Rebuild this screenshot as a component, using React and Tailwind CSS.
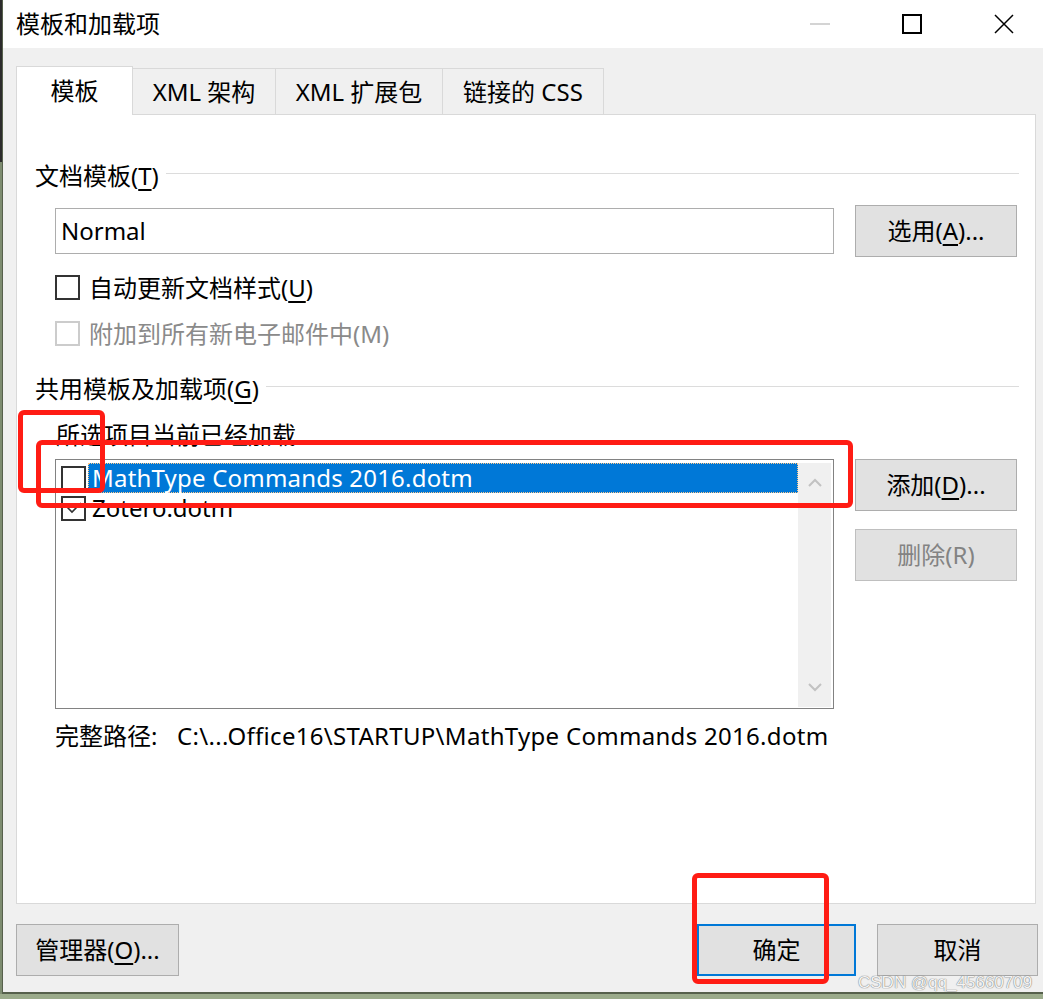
import React from 'react';

const FONT = { fontFamily: '"Noto Sans", "Noto Sans CJK SC", sans-serif' };

function Btn({ children, w, disabled, primary }) {
  return (
    <div
      className={`h-[52px] flex items-center justify-center bg-[#e1e1e1] text-[24px] ${
        primary ? 'border-2 border-[#0078d7]' : disabled ? 'border border-[#bfbfbf] text-[#838383]' : 'border border-[#adadad] text-black'
      }`}
      style={{ width: w }}
    >
      {children}
    </div>
  );
}

function Check({ checked, disabled }) {
  return (
    <div
      className={`w-[25px] h-[25px] shrink-0 border-2 bg-white flex items-center justify-center ${
        disabled ? 'border-[#cccccc]' : 'border-[#333333]'
      }`}
    >
      {checked && (
        <svg width="18" height="14" viewBox="0 0 18 14">
          <path d="M2 6 L7 11 L16 2" fill="none" stroke="#333" strokeWidth="1.6" />
        </svg>
      )}
    </div>
  );
}

function GroupHeader({ children }) {
  return (
    <div className="h-[30px] flex items-center text-[24px] text-black">
      <span className="whitespace-nowrap">{children}</span>
      <div className="flex-1 h-px bg-[#dcdcdc] ml-[7px] -translate-y-[3px]" />
    </div>
  );
}

function Chevron({ up }) {
  return (
    <svg width="14" height="9" viewBox="0 0 14 9">
      <path d={up ? 'M1 8 L7 2 L13 8' : 'M1 1 L7 7 L13 1'} fill="none" stroke="#c2c2c2" strokeWidth="2" />
    </svg>
  );
}

export default function App() {
  return (
    <div className="relative w-[1043px] h-[999px] flex flex-col bg-[#9bab8b] overflow-hidden" style={FONT}>
      <div className="flex h-[994px]">
        {/* background strip at the left */}
        <div className="w-[2px] flex flex-col">
          <div className="h-[162px] bg-[#2c2c2c]" />
          <div className="flex-1 bg-[#7d8c70]" />
        </div>

        {/* dialog window */}
        <div className="w-[1041px] flex flex-col border-l border-b-2 border-[#56604c] bg-[#f0f0f0]">
          {/* title bar */}
          <div className="h-[48px] bg-white flex items-center pl-[13px] shrink-0">
            <span className="text-[24px] text-black">模板和加载项</span>
            <div className="ml-auto flex items-center gap-[72px] pr-[29px]">
              <svg width="20" height="20" viewBox="0 0 20 20">
                <path d="M0 10 H20" stroke="#c6c6c6" strokeWidth="1.5" />
              </svg>
              <svg width="20" height="20" viewBox="0 0 20 20">
                <rect x="1" y="1" width="18" height="18" fill="none" stroke="#000" strokeWidth="2" />
              </svg>
              <svg width="20" height="20" viewBox="0 0 20 20">
                <path d="M1 1 L19 19 M19 1 L1 19" stroke="#000" strokeWidth="1.5" />
              </svg>
            </div>
          </div>

          {/* tabs */}
          <div className="pt-[17px] pl-[13px] flex items-end h-[66px] shrink-0">
            <div className="w-[117px] h-[49px] bg-white border border-b-0 border-[#d9d9d9] flex items-center justify-center text-[24px] relative z-10 -mb-px">
              模板
            </div>
            <div className="w-[143px] h-[46px] border-t border-r border-[#d9d9d9] flex items-center justify-center text-[24px]">
              XML 架构
            </div>
            <div className="w-[167px] h-[46px] border-t border-r border-[#d9d9d9] flex items-center justify-center text-[24px]">
              XML 扩展包
            </div>
            <div className="w-[161px] h-[46px] border-t border-r border-[#d9d9d9] flex items-center justify-center text-[24px]">
              链接的 CSS
            </div>
          </div>

          {/* tab panel */}
          <div className="ml-[13px] w-[1020px] h-[790px] bg-white border border-[#d9d9d9] shrink-0 flex flex-col pl-[18px] pr-[16px] pt-[46px] text-black">
            <GroupHeader>
              文档模板(<u className="underline-offset-4">T</u>)
            </GroupHeader>

            <div className="mt-[14px] h-[52px] pl-[20px] flex items-center gap-[21px]">
              <div className="w-[779px] h-[46px] border border-[#adadad] flex items-center pl-[5px] text-[24px]">
                Normal
              </div>
              <Btn w={162}>
                选用(<u className="underline-offset-4">A</u>)...
              </Btn>
            </div>

            <div className="mt-[18px] h-[25px] pl-[20px] flex items-center gap-[9px] text-[24px]">
              <Check />
              <span>
                自动更新文档样式(<u className="underline-offset-4">U</u>)
              </span>
            </div>

            <div className="mt-[21px] h-[25px] pl-[20px] flex items-center gap-[9px] text-[24px] text-[#8a8a8a]">
              <Check disabled />
              <span>附加到所有新电子邮件中(M)</span>
            </div>

            <div className="mt-[28px]">
              <GroupHeader>
                共用模板及加载项(<u className="underline-offset-4">G</u>)
              </GroupHeader>
            </div>

            <div className="mt-[16px] h-[30px] pl-[21px] flex items-center text-[24px]">所选项目当前已经加载</div>

            <div className="mt-[9px] pl-[20px] flex gap-[21px]">
              {/* list */}
              <div className="w-[779px] h-[250px] border border-[#828282] flex pt-[3px] pb-[1px] pl-[3px] pr-[2px]">
                <div className="flex-1 flex flex-col">
                  <div className="h-[30px] flex items-center">
                    <div className="ml-[2px] mr-[2px]">
                      <Check />
                    </div>
                    <div className="flex-1 h-[30px] bg-[#0078d7] border border-dotted border-[#ffc98a] text-white text-[24px] tracking-[0.2px] flex items-center pl-[3px]">
                      MathType Commands 2016.dotm
                    </div>
                  </div>
                  <div className="h-[30px] flex items-center">
                    <div className="ml-[2px] mr-[6px]">
                      <Check checked />
                    </div>
                    <span className="text-[24px]">Zotero.dotm</span>
                  </div>
                </div>
                <div className="w-[33px] h-full bg-[#f0f0f0] flex flex-col items-center justify-between py-[15px]">
                  <Chevron up />
                  <Chevron />
                </div>
              </div>

              {/* side buttons */}
              <div className="flex flex-col gap-[18px]">
                <Btn w={162}>
                  添加(<u className="underline-offset-4">D</u>)...
                </Btn>
                <Btn w={162} disabled>
                  删除(R)
                </Btn>
              </div>
            </div>

            <div className="mt-[12px] h-[30px] pl-[20px] flex items-center text-[24px]">
              <span className="w-[122px]">完整路径:</span>
              <span className="tracking-[0.3px]">C:\...Office16\STARTUP\MathType Commands 2016.dotm</span>
            </div>
          </div>

          {/* bottom buttons */}
          <div className="mt-[20px] pl-[13px] pr-[5px] flex items-center">
            <Btn w={163}>
              管理器(<u className="underline-offset-4">O</u>)...
            </Btn>
            <div className="ml-auto flex gap-[21px]">
              <Btn w={159} primary>
                确定
              </Btn>
              <Btn w={161}>取消</Btn>
            </div>
          </div>
        </div>
      </div>

      {/* red annotation boxes */}
      <div className="absolute left-[18px] top-[410px] w-[87px] h-[83px] border-[5px] border-[#ff1c14] rounded-[6px]" />
      <div className="absolute left-[36px] top-[440px] w-[817px] h-[68px] border-[5px] border-[#ff1c14] rounded-[6px]" />
      <div className="absolute left-[692px] top-[873px] w-[137px] h-[111px] border-[5px] border-[#ff1c14] rounded-[6px]" />

      {/* watermark */}
      <div
        className="absolute left-[858px] top-[970px] text-[17px] text-[#f4f4f4] [text-shadow:0_0_1px_#7a7a7a,0_0_1px_#7a7a7a]"
        style={{ fontFamily: '"Liberation Sans", Arial, sans-serif' }}
      >
        CSDN @qq_45660709
      </div>
    </div>
  );
}
